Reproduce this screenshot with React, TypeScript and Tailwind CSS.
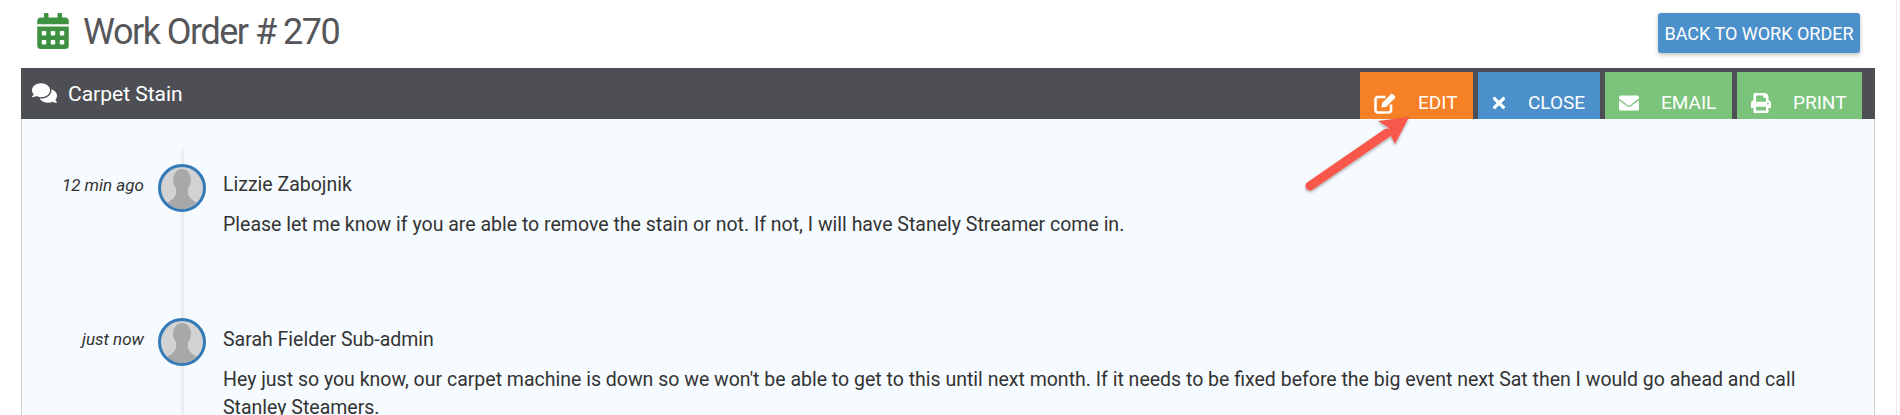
import { FaCalendarAlt, FaComments, FaTimes, FaEnvelope, FaPrint } from "react-icons/fa";
import type { ReactNode } from "react";

function Avatar() {
  return (
    <div className="relative z-10 h-[48px] w-[48px] shrink-0 overflow-hidden rounded-full border-[3px] border-[#337ab7] bg-[#d2d2d2]">
      <svg viewBox="0 0 42 42" className="h-full w-full">
        <ellipse cx="21" cy="13" rx="9" ry="11" fill="#a8a8a8" />
        <path d="M15 20h12v7c1 3 3 5 6 7 2 1 5 3 6 8H3c1-5 4-7 6-8 3-2 5-4 6-7z" fill="#a8a8a8" />
      </svg>
    </div>
  );
}

function EditIcon() {
  return (
    <svg viewBox="0 0 22 22" className="h-[22px] w-[22px]" fill="none">
      <path d="M17 12.5V18a2.5 2.5 0 0 1-2.5 2.5H4A2.5 2.5 0 0 1 1.5 18V7.5A2.5 2.5 0 0 1 4 5h7.5" stroke="currentColor" strokeWidth="2.6" />
      <path d="M7.5 15.5 8 11 17 2a1.2 1.2 0 0 1 1.7 0l2.3 2.3a1.2 1.2 0 0 1 0 1.7l-9 9z" fill="currentColor" />
    </svg>
  );
}

function Tab({ bg, w, icon, label }: { bg: string; w: string; icon: ReactNode; label: string }) {
  return (
    <div className={`flex h-[47px] items-center gap-[22px] pl-[14px] pt-[15px] text-[19px] text-white ${bg} ${w}`}>
      {icon}
      <span>{label}</span>
    </div>
  );
}

function Entry({ time, name, textPad, children }: { time: string; name: string; textPad: string; children: ReactNode }) {
  return (
    <div className="flex h-[154px]">
      <div className="w-[122px] shrink-0 pt-[11px] text-right text-[17px] italic leading-[20px] text-[#333]">{time}</div>
      <div className="ml-[14px] mr-[17px]"><Avatar /></div>
      <div className={`w-[1625px] shrink-0 text-[19.5px] text-[#333] ${textPad}`}>
        <div className="pt-[9px] leading-[24px]">{name}</div>
        <div className="mt-[14px] leading-[28px]">{children}</div>
      </div>
    </div>
  );
}

export default function App() {
  return (
    <div className="relative h-[415px] w-[1900px] overflow-hidden bg-white font-['Roboto',sans-serif]">
      <div className="flex h-[68px] items-start justify-between pl-[37px] pr-[40px]">
        <div className="flex items-center gap-[14px] pt-[10px]">
          <FaCalendarAlt className="h-[36px] w-[32px] text-[#3f9142]" />
          <h1 className="pt-[2px] text-[36px] leading-[40px] tracking-[-1.5px] text-[#55565a]">Work Order # 270</h1>
        </div>
        <div className="mt-[13px] flex h-[40px] w-[202px] items-center justify-center whitespace-nowrap rounded-[3px] bg-[#4b8fcb] text-[18px] text-white shadow-[0_2px_4px_rgba(0,0,0,0.25)]">
          BACK TO WORK ORDER
        </div>
      </div>
      <div className="ml-[21px] w-[1854px] border-x border-[#cfcfcf]">
        <div className="-mx-px flex h-[51px] items-start justify-between bg-[#4e4f54] pl-[11px] pr-[13px]">
          <div className="flex items-center gap-[11px] pt-[11px] text-[21px] leading-[26px] text-white">
            <FaComments className="h-[24px] w-[25px]" />
            <span className="pt-[2px]">Carpet Stain</span>
          </div>
          <div className="mt-[4px] flex gap-[5px]">
            <Tab bg="bg-[#f68026]" w="w-[113px]" label="EDIT" icon={<EditIcon />} />
            <Tab bg="bg-[#4b8fcb]" w="w-[122px]" label="CLOSE" icon={<FaTimes className="h-[18px] w-[14px]" />} />
            <Tab bg="bg-[#7cc47c]" w="w-[127px]" label="EMAIL" icon={<FaEnvelope className="h-[20px] w-[20px]" />} />
            <Tab bg="bg-[#7cc47c]" w="w-[125px]" label="PRINT" icon={<FaPrint className="h-[20px] w-[20px]" />} />
          </div>
        </div>
        <div className="relative h-[296px] bg-[#f6fbff] pt-[45px]">
          <div className="absolute bottom-0 left-[159px] top-[30px] w-[3px] bg-[#ebeef0]" />
          <Entry textPad="pt-0" time="12 min ago" name="Lizzie Zabojnik">
            Please let me know if you are able to remove the stain or not. If not, I will have Stanely Streamer come in.
          </Entry>
          <Entry textPad="pt-[1px]" time="just now" name="Sarah Fielder Sub-admin">
            Hey just so you know, our carpet machine is down so we won't be able to get to this until next month. If it needs to be fixed before the big event next Sat then I would go ahead and call Stanley Steamers.
          </Entry>
        </div>
      </div>
      <div className="absolute right-[3px] top-0 h-full w-px bg-[#ececec]" />
      <svg className="absolute left-[1295px] top-[110px]" width="125" height="90" viewBox="0 0 125 90">
        <defs>
          <filter id="s" x="-20%" y="-20%" width="140%" height="140%">
            <feDropShadow dx="0" dy="1.5" stdDeviation="1.5" floodColor="#000" floodOpacity="0.35" />
          </filter>
        </defs>
        <g filter="url(#s)">
          <path d="M15 76 L92 23" stroke="#f8584c" strokeWidth="9" strokeLinecap="round" />
          <path d="M114 7 L83 11 L94 18 L96 26 L100 34 Z" fill="#f8584c" />
        </g>
      </svg>
    </div>
  );
}
